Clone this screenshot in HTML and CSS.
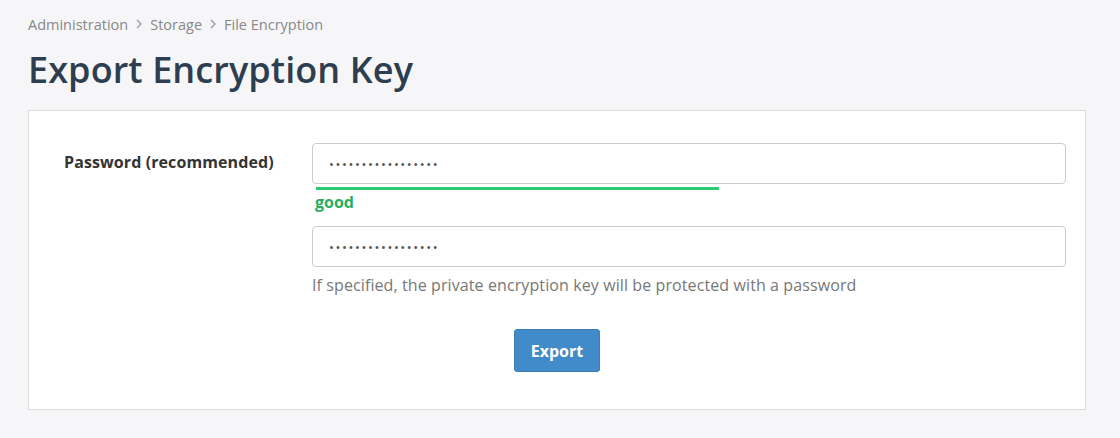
FILE: index.html
```html
<!DOCTYPE html>
<html lang="en">
<head>
  <meta charset="UTF-8">
  <title>Export Encryption Key</title>
  <link rel="stylesheet" href="styles.css">
</head>
<body>
  <div class="page">
    <nav class="crumbs">
      <span>Administration</span>
      <svg class="sep" width="8" height="10" viewBox="0 0 8 10"><path d="M2 1l4 4-4 4" fill="none" stroke="#999" stroke-width="1.3"/></svg>
      <span>Storage</span>
      <svg class="sep" width="8" height="10" viewBox="0 0 8 10"><path d="M2 1l4 4-4 4" fill="none" stroke="#999" stroke-width="1.3"/></svg>
      <span>File Encryption</span>
    </nav>
    <h1>Export Encryption Key</h1>

    <div class="panel">
      <form class="form-row">
        <label class="label">Password (recommended)</label>
        <div class="field">
          <input type="password" class="input" value="aaaaaaaaaaaaaaaaa">
          <div class="meter"><div class="meter-bar" style="width: 403px;"></div></div>
          <div class="strength">good</div>
          <input type="password" class="input" value="aaaaaaaaaaaaaaaaa">
          <p class="help">If specified, the private encryption key will be protected with a password</p>
        </div>
      </form>
      <div class="actions">
        <button type="button" class="btn">Export</button>
      </div>
    </div>
  </div>
</body>
</html>
```

FILE: styles.css
```css
body {
  margin: 0;
  background-color: #f6f6f8;
  font-family: "Open Sans", "Noto Sans", sans-serif;
  color: #333;
}
.page {
  padding: 14px 34px 0 28px;
}
.crumbs {
  display: flex;
  align-items: center;
  gap: 6px;
  font-size: 14.5px;
  color: #888;
  height: 20px;
}
.crumbs .sep {
  margin: 0 1px;
}
h1 {
  margin: 12px 0 0;
  font-size: 36px;
  font-weight: 600;
  color: #2c3e50;
  line-height: 48px;
  letter-spacing: 0.1px;
}
.panel {
  margin-top: 16px;
  background-color: white;
  border: 1px solid #ddd;
  padding: 32px 0 37px;
}
.form-row {
  display: flex;
  margin: 0;
  padding: 0 19px 0 35px;
}
.label {
  width: 248px;
  flex-shrink: 0;
  font-size: 16px;
  font-weight: 700;
  color: #333;
  line-height: 22px;
  padding-top: 8px;
  letter-spacing: 0.1px;
}
.field {
  flex: 1;
}
.input {
  display: block;
  box-sizing: border-box;
  width: 100%;
  height: 41px;
  margin: 0;
  padding: 0 16px;
  border: 1px solid #ccc;
  border-radius: 4px;
  font-family: "Open Sans", sans-serif;
  font-size: 13px;
  color: #555;
  letter-spacing: 1.6px;
}
.meter {
  margin: 3px 0 0 4px;
  height: 3px;
}
.meter-bar {
  height: 3px;
  background-color: #2ecc71;
}
.strength {
  margin: 2px 0 14px 3px;
  font-size: 16px;
  font-weight: 700;
  color: #27ae60;
  line-height: 20px;
}
.help {
  margin: 7px 0 0;
  font-size: 16px;
  color: #777;
  line-height: 22px;
  letter-spacing: 0.1px;
}
.actions {
  display: flex;
  justify-content: center;
  margin-top: 33px;
}
.btn {
  width: 86px;
  height: 43px;
  background-color: #428bca;
  border: 1px solid #3a7cb6;
  border-radius: 3px;
  color: white;
  font-family: "Open Sans", sans-serif;
  font-size: 16px;
  font-weight: 700;
  cursor: pointer;
}
```
